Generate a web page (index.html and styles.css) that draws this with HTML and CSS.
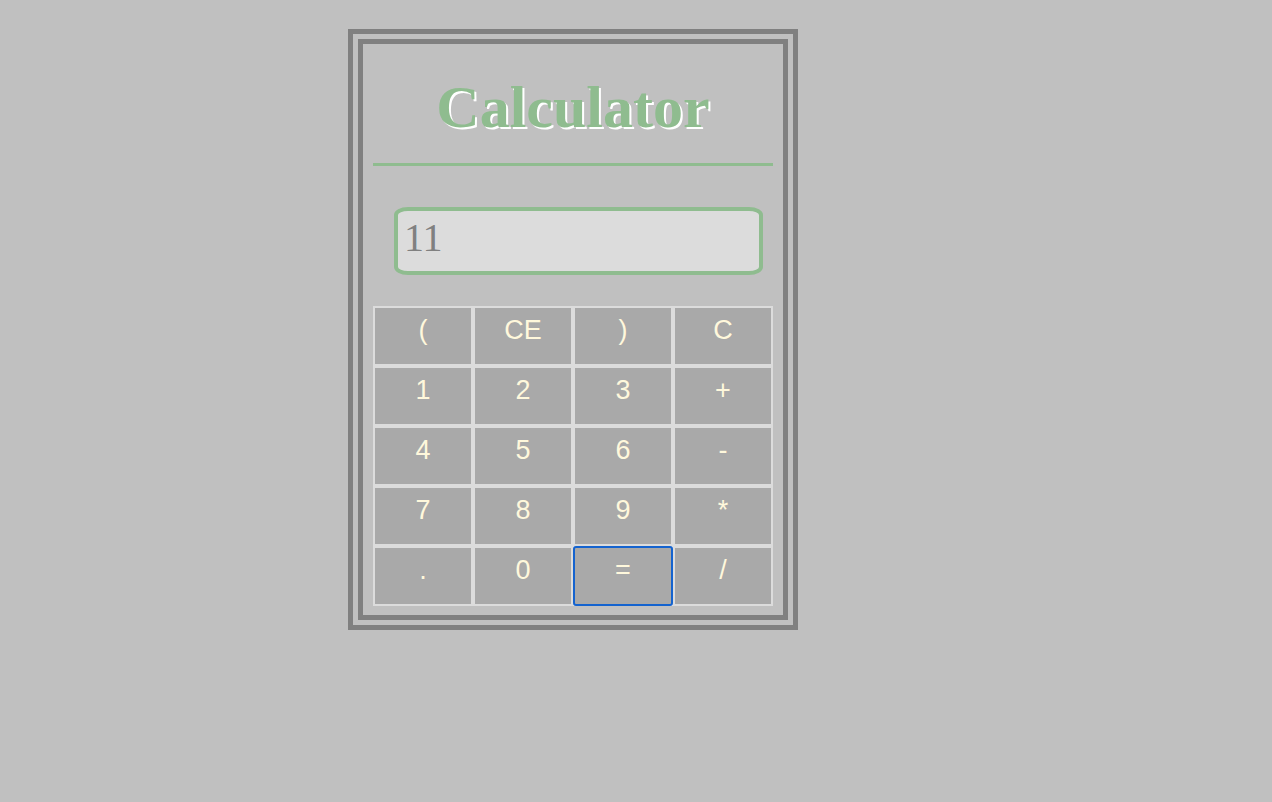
FILE: index.html
```html
<!DOCTYPE html>
<html>
<head>
<meta charset="utf-8">
<title>Calculator</title>
<link rel="stylesheet" href="styles.css">
</head>
<body>
<div class="calc">
  <h1 class="title">Calculator</h1>
  <hr class="rule">
  <input class="display" type="text" value="11">
  <div class="keys">
    <button class="key">(</button>
    <button class="key">CE</button>
    <button class="key">)</button>
    <button class="key">C</button>
    <button class="key">1</button>
    <button class="key">2</button>
    <button class="key">3</button>
    <button class="key">+</button>
    <button class="key">4</button>
    <button class="key">5</button>
    <button class="key">6</button>
    <button class="key">-</button>
    <button class="key">7</button>
    <button class="key">8</button>
    <button class="key">9</button>
    <button class="key">*</button>
    <button class="key">.</button>
    <button class="key">0</button>
    <button class="key key-focus">=</button>
    <button class="key">/</button>
  </div>
</div>
</body>
</html>
```

FILE: styles.css
```css
html, body {
  background: #c0c0c0;
}
body {
  margin: 8px;
}
.calc {
  width: 400px;
  margin: 21px 0 0 340px;
  padding: 10px 10px 9px;
  border: 15px double #808080;
}
.title {
  margin: 18px 0 0;
  height: 70px;
  line-height: 70px;
  font-family: "Liberation Serif", "Times New Roman", serif;
  font-size: 60px;
  font-weight: bold;
  text-align: center;
  color: #8fbc8f;
  text-shadow: 2px 2px 0 #ffffff;
}
.rule {
  margin: 21px 0 0;
  height: 3px;
  border: none;
  background: #8fbc8f;
}
.display {
  display: block;
  box-sizing: border-box;
  width: 369px;
  height: 68px;
  margin: 41px 0 0 21px;
  padding: 0 2px 8px 6px;
  border: 4px solid #8fbc8f;
  border-radius: 14px / 8px;
  background: #dcdcdc;
  color: #808080;
  font-family: "Liberation Serif", "Times New Roman", serif;
  font-size: 40px;
  outline: none;
}
.keys {
  display: grid;
  grid-template-columns: repeat(4, 100px);
  grid-auto-rows: 60px;
  margin-top: 31px;
  background: #e6e6e6;
}
.key {
  box-sizing: border-box;
  width: 100px;
  height: 60px;
  margin: 0;
  padding: 0 0 12px;
  border: 2px solid #dcdcdc;
  border-radius: 0;
  background: #a9a9a9;
  color: #fff8dc;
  font-family: "Liberation Sans", Arial, sans-serif;
  font-size: 27px;
  cursor: pointer;
}
.key-focus {
  border-color: #1463cf;
  border-radius: 3px;
}
```
